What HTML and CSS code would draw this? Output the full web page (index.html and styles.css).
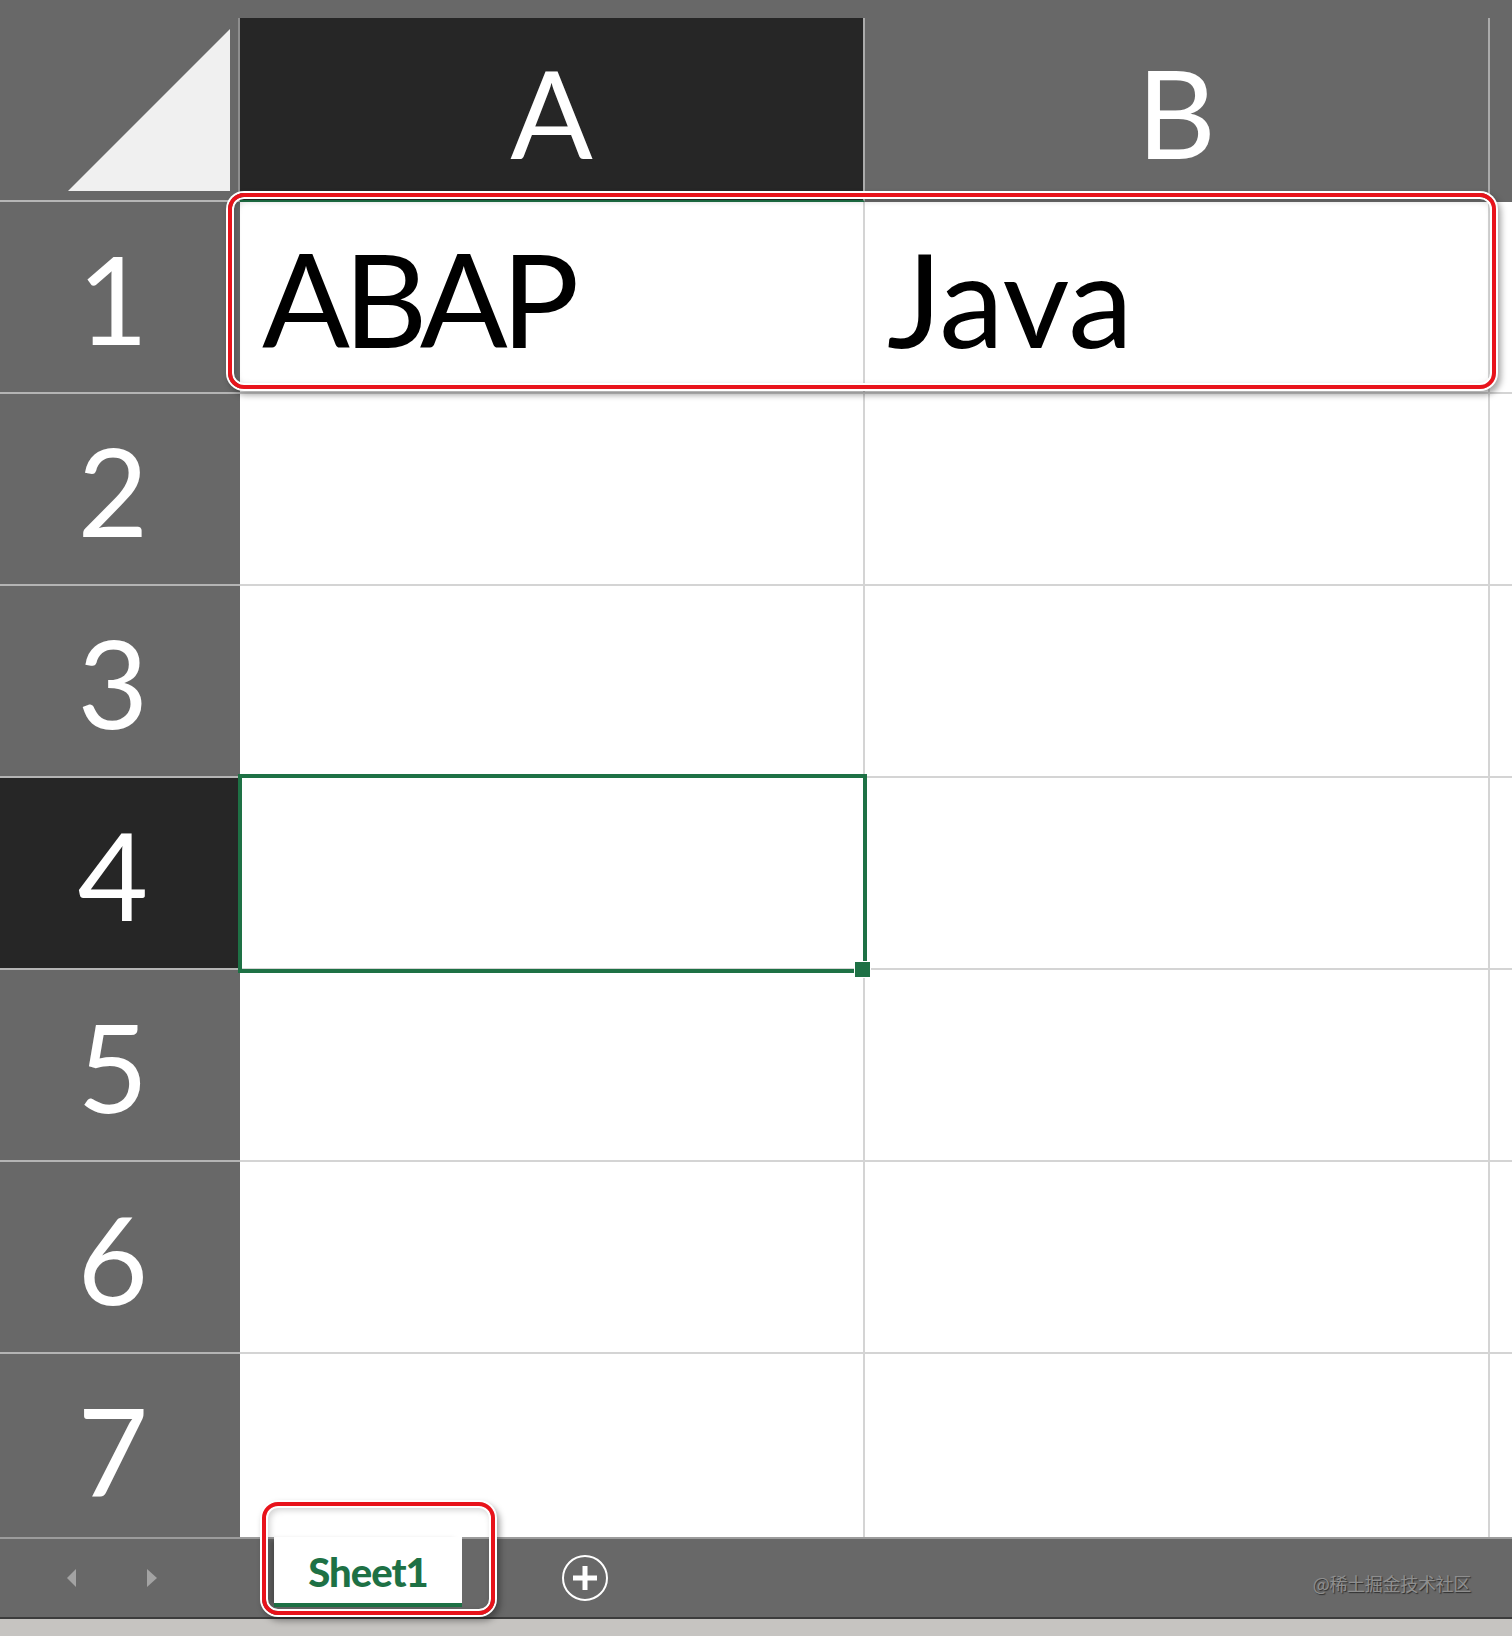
FILE: index.html
```html
<!DOCTYPE html>
<html lang="en">
<head>
<meta charset="utf-8">
<title>Sheet1</title>
<link rel="stylesheet" href="styles.css">
</head>
<body>
<div class="sheet">
  <div class="topstrip"></div>
  <div class="grid">
    <div class="corner">
      <svg class="corner-tri" width="162" height="162" viewBox="0 0 162 162"><polygon points="162,0 162,162 0,162" fill="#f0f0f0"/></svg>
    </div>
    <div class="colhead active">A</div>
    <div class="colhead">B</div>
    <div class="colhead rest"></div>

    <div class="rowhead">1</div>
    <div class="cell"><span class="txt tight">ABAP</span></div>
    <div class="cell"><span class="txt">Java</span></div>
    <div class="cell rest"></div>

    <div class="rowhead">2</div>
    <div class="cell"></div>
    <div class="cell"></div>
    <div class="cell rest"></div>

    <div class="rowhead">3</div>
    <div class="cell"></div>
    <div class="cell"></div>
    <div class="cell rest"></div>

    <div class="rowhead active">4</div>
    <div class="cell selected"></div>
    <div class="cell"></div>
    <div class="cell rest"></div>

    <div class="rowhead">5</div>
    <div class="cell"></div>
    <div class="cell"></div>
    <div class="cell rest"></div>

    <div class="rowhead">6</div>
    <div class="cell"></div>
    <div class="cell"></div>
    <div class="cell rest"></div>

    <div class="rowhead last">7</div>
    <div class="cell last"></div>
    <div class="cell last"></div>
    <div class="cell rest last"></div>
  </div>
  <div class="tabbar">
    <span class="arrow arrow-left"></span>
    <span class="arrow arrow-right"></span>
    <div class="tab">Sheet1</div>
    <svg class="addsheet" width="48" height="48" viewBox="0 0 48 48">
      <circle cx="24" cy="24" r="22" fill="none" stroke="#ffffff" stroke-width="2"/>
      <rect x="12" y="21.5" width="24" height="5" fill="#ffffff"/>
      <rect x="21.5" y="12" width="5" height="24" fill="#ffffff"/>
    </svg>
    <span class="watermark">@稀土掘金技术社区</span>
  </div>
  <div class="footer"></div>
  <div class="mark mark-row"></div>
  <div class="mark mark-tab"></div>
</div>
</body>
</html>
```
FILE: styles.css
```css
* { box-sizing: border-box; }
html, body { margin: 0; padding: 0; }
body {
  background: #686868;
  font-family: "Lato", "Open Sans", sans-serif;
}
.sheet {
  position: relative;
  width: 1512px;
  height: 1636px;
  overflow: hidden;
  background: #686868;
}
.topstrip { height: 18px; background: #686868; }
.grid {
  display: grid;
  grid-template-columns: 240px 625px 625px 22px;
  grid-template-rows: 184px repeat(6, 192px) 183px;
}
.corner {
  background: #686868;
  border-right: 2px solid #8e8e8e;
  border-bottom: 2px solid #b6b6b6;
  display: flex;
  justify-content: flex-end;
  align-items: flex-end;
  padding: 0 8px 9px 0;
}
.corner-tri { display: block; }
.colhead {
  background: #686868;
  color: #ffffff;
  font-size: 122px;
  line-height: 1;
  display: flex;
  justify-content: center;
  align-items: flex-start;
  padding-top: 33px;
  border-right: 2px solid #ababab;
}
.colhead.active {
  background: #262626;
  border-bottom: 2px solid #1e7145;
}
.colhead.rest { border-right: none; }
.rowhead {
  background: #686868;
  color: #ffffff;
  font-size: 122px;
  line-height: 1;
  display: flex;
  justify-content: center;
  align-items: flex-start;
  padding-top: 35px;
  padding-right: 14px;
  border-bottom: 2px solid #b4b4b4;
}
.rowhead.active { background: #262626; }
.rowhead.last { border-bottom: none; }
.cell {
  background: #ffffff;
  border-right: 2px solid #d4d4d4;
  border-bottom: 2px solid #d4d4d4;
  color: #000000;
  font-size: 130px;
  line-height: 1;
  display: flex;
  align-items: flex-end;
  padding: 0 0 29px 22px;
}
.txt { display: block; }
.txt.tight { letter-spacing: -6.5px; }
.cell.rest { border-right: none; }
.cell.last { border-bottom: none; }
.cell.selected { position: relative; }
.cell.selected::after {
  content: "";
  position: absolute;
  left: -2px;
  top: -4px;
  right: -4px;
  bottom: -5px;
  border: 4px solid #1e7145;
}
.cell.selected::before {
  content: "";
  position: absolute;
  right: -7px;
  bottom: -9px;
  width: 15px;
  height: 15px;
  background: #1e7145;
  box-shadow: 0 0 0 1px #ffffff;
  z-index: 2;
}
.tabbar {
  height: 82px;
  border-top: 2px solid #9c9c9c;
  border-bottom: 2px solid #3c3c3c;
  background: #686868;
  display: flex;
  align-items: center;
  padding-left: 67px;
  padding-right: 41px;
}
.arrow {
  width: 0;
  height: 0;
  border-top: 9px solid transparent;
  border-bottom: 9px solid transparent;
}
.arrow-left { border-right: 9px solid #a3a3a3; }
.arrow-right { border-left: 10px solid #a3a3a3; margin-left: 71px; }
.tab {
  align-self: flex-start;
  margin-top: -2px;
  margin-left: 117px;
  width: 188px;
  height: 70px;
  background: #ffffff;
  border-bottom: 4px solid #1e7145;
  box-shadow: -5px 0 5px -3px rgba(0, 0, 0, 0.35);
  color: #1e7145;
  font-weight: 900;
  font-size: 40px;
  line-height: 1;
  letter-spacing: -1px;
  display: flex;
  justify-content: center;
  align-items: flex-start;
  padding-top: 15px;
}
.addsheet { display: block; margin-left: 99px; }
.watermark {
  margin-left: auto;
  margin-top: 10px;
  font-family: "Noto Sans CJK SC", "Noto Sans", sans-serif;
  font-size: 18px;
  color: #8e8e8e;
  text-shadow: 1px 1px 1px #2e2e2e;
  letter-spacing: -0.3px;
}
.footer { height: 17px; background: #c6c4c1; }
.mark {
  position: absolute;
  border: 4px solid #e8131b;
  border-radius: 16px;
  box-shadow:
    0 0 0 2px #ffffff,
    3px 4px 6px 2px rgba(0, 0, 0, 0.35),
    inset 0 0 0 2px #ffffff,
    inset 2px 2px 6px 2px rgba(0, 0, 0, 0.18);
}
.mark-row { left: 228px; top: 193px; width: 1268px; height: 196px; }
.mark-tab { left: 262px; top: 1502px; width: 233px; height: 113px; }
```
